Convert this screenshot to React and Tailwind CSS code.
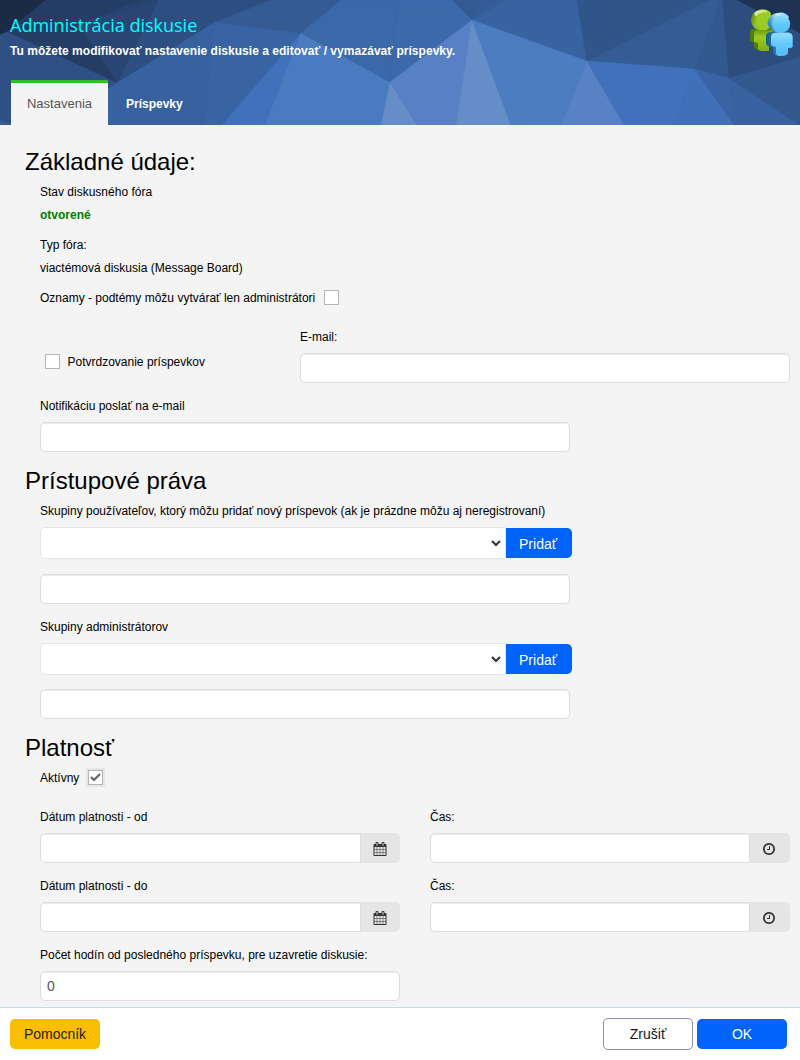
const INPUT =
  "block h-[30px] w-full rounded-[5px] border border-[#ddd] bg-white px-1.5 pb-px text-sm text-[#555] shadow-[inset_0_1px_1px_rgba(0,0,0,0.075)] outline-none";

function Label({ children, className = "" }) {
  return <div className={`h-[23px] whitespace-nowrap leading-[25px] ${className}`}>{children}</div>;
}

function Heading({ children, className = "" }) {
  return (
    <h2 className={`-ml-[15px] h-8 whitespace-nowrap text-2xl leading-8 ${className}`}>{children}</h2>
  );
}

function Facets() {
  const facets = [
    ["#1b2b43", "0,0 46,0 7,32 0,35"],
    ["#264370", "46,0 158,0 117,83 7,32"],
    ["#243c62", "46,0 75,20 117,83 7,32"],
    ["#2d4e80", "158,0 272,0 215,22 117,83"],
    ["#284573", "158,0 140,37 117,83 7,32 78,24"],
    ["#243d64", "46,0 139,0 78,24 117,83 7,32"],
    ["#2f5084", "7,32 117,83 50,125 12,125 0,120 0,35"],
    ["#355d98", "0,120 12,125 0,125"],
    ["#3861a0", "215,22 204,125 50,125 117,83"],
    ["#3964a3", "215,22 301,33 222,125 204,125"],
    ["#345b93", "272,0 341,0 301,33 215,22"],
    ["#4171ba", "301,33 265,125 222,125"],
    ["#4a7bc0", "301,33 390,82 381,125 265,125"],
    ["#3b68a8", "341,0 398,0 390,82 301,33"],
    ["#3c68ac", "398,0 452,0 472,20 390,82"],
    ["#658dc8", "390,82 417,125 381,125"],
    ["#5781c4", "472,20 456,125 417,125 390,82"],
    ["#658dc8", "472,20 511,125 456,125"],
    ["#335b93", "452,0 482,0 472,20"],
    ["#345c96", "482,0 505,0 472,20"],
    ["#3862a0", "505,0 577,0 587,61 472,20"],
    ["#4d7dc1", "472,20 587,61 561,125 511,125"],
    ["#5982c5", "587,61 624,125 561,125"],
    ["#305589", "577,0 710,0 587,61"],
    ["#345d95", "710,0 721,0 695,69 587,61"],
    ["#4171ba", "587,61 695,69 675,125 624,125"],
    ["#4070b8", "695,69 734,125 675,125"],
    ["#325890", "721,0 723,0 729,78 695,69"],
    ["#3963a2", "695,69 729,78 739,125 734,125"],
    ["#3862a0", "729,78 799,125 739,125"],
    ["#2c4d7d", "723,0 737,0 800,33 800,57 729,78"],
    ["#1e3353", "737,0 800,0 800,33"],
    ["#32588e", "729,78 800,57 800,125"],
  ];
  return (
    <svg className="absolute inset-0 h-full w-full" viewBox="0 0 800 125" preserveAspectRatio="none" aria-hidden="true">
      <rect width="800" height="125" fill="#3862a0" />
      {facets.map(([fill, points], i) => (
        <polygon key={i} points={points} fill={fill} stroke={fill} strokeWidth="0.4" />
      ))}
    </svg>
  );
}

function PeopleIcon() {
  return (
    <svg className="h-12 w-11" viewBox="0 0 44 48" aria-hidden="true">
      <defs>
        <linearGradient id="green" x1="0" x2="1" y1="0" y2="0.3">
          <stop offset="0" stopColor="#4f7d0b" />
          <stop offset="0.4" stopColor="#91c01f" />
          <stop offset="1" stopColor="#a3d22c" />
        </linearGradient>
        <linearGradient id="greenBody" x1="0" x2="0" y1="0" y2="1">
          <stop offset="0" stopColor="#6f9a14" />
          <stop offset="0.35" stopColor="#9aca25" />
          <stop offset="1" stopColor="#7fae16" />
        </linearGradient>
        <linearGradient id="blueSide" x1="0" x2="1" y1="0" y2="0">
          <stop offset="0" stopColor="#165e86" />
          <stop offset="1" stopColor="#48aee2" />
        </linearGradient>
        <linearGradient id="blueTop" x1="0" x2="1" y1="0.4" y2="0">
          <stop offset="0" stopColor="#2988bd" />
          <stop offset="0.5" stopColor="#c5ecff" />
          <stop offset="1" stopColor="#7dcbff" />
        </linearGradient>
        <linearGradient id="blue" x1="0" x2="0" y1="0" y2="1">
          <stop offset="0" stopColor="#94dcff" />
          <stop offset="0.5" stopColor="#5fc9ff" />
          <stop offset="1" stopColor="#55bff5" />
        </linearGradient>
      </defs>
      <path d="M1 22Q1 20 4 20L24 19L25 34L20 36V41Q19 43 12 42Q6 41 5 38L5 34L1 32Z" fill="#4f7d0b" />
      <path d="M5 23Q5 21 9 21H24V35H20V42H13Q9 42 9 39V34L5 33Z" fill="url(#greenBody)" />
      <path d="M11 .5Q18 -1 22 4L18 21H10Q3 19 2 12Q2 3 11 .5Z" fill="url(#green)" />
      <path d="M5 4Q10 -1 18 2L17 4Q10 3 7 8Z" fill="#d3ed91" />
      <circle cx="15.800" cy="11.800" r="8.600" fill="#9acb26" />
      <path d="M17 27Q17 24 21 23H38Q42 23 43.500 27V38Q41 40 39 39V44Q38 47 31 47Q25 47 24 44V38Q17 38 17 34Z" fill="url(#blueSide)" />
      <path d="M22 28Q22 24 26 24H39Q43.500 24 43.500 28V38Q41 39 39 39V44Q38 47 31 47Q27 47 27 44V38Q21 37 22 34Z" fill="url(#blue)" />
      <path d="M28 4Q36 2 40 8L34 24H29Q20 22 18.500 14Q20 5 28 4Z" fill="url(#blueTop)" />
      <circle cx="32.200" cy="15" r="9" fill="url(#blue)" />
    </svg>
  );
}

function CalendarIcon() {
  return (
    <svg className="mr-0.5 mt-0.5 size-3.5" viewBox="0 0 1792 1792" fill="#333" aria-hidden="true">
      <path d="M192 1664h288v-288h-288v288zm352 0h320v-288h-320v288zm-352-352h288v-320h-288v320zm352 0h320v-320h-320v320zm-352-384h288v-288h-288v288zm736 736h320v-288h-320v288zm-384-736h320v-288h-320v288zm768 736h288v-288h-288v288zm-384-352h320v-320h-320v320zm-352-864v-288q0-13-9.5-22.5t-22.5-9.5h-64q-13 0-22.5 9.5t-9.5 22.5v288q0 13 9.5 22.5t22.5 9.5h64q13 0 22.5-9.5t9.5-22.5zm736 864h288v-320h-288v320zm-384-384h320v-288h-320v288zm384 0h288v-288h-288v288zm32-480v-288q0-13-9.5-22.5t-22.5-9.5h-64q-13 0-22.5 9.5t-9.5 22.5v288q0 13 9.5 22.5t22.5 9.5h64q13 0 22.5-9.5t9.5-22.5zm384-64v1280q0 52-38 90t-90 38h-1408q-52 0-90-38t-38-90v-1280q0-52 38-90t90-38h128v-96q0-66 47-113t113-47h64q66 0 113 47t47 113v96h384v-96q0-66 47-113t113-47h64q66 0 113 47t47 113v96h128q52 0 90 38t38 90z" />
    </svg>
  );
}

function ClockIcon() {
  return (
    <svg className="mr-0.5 mt-0.5 h-3.5 w-3" viewBox="0 0 1536 1792" fill="#333" aria-hidden="true">
      <path d="M896 544v448q0 14-9 23t-23 9h-320q-14 0-23-9t-9-23v-64q0-14 9-23t23-9h224v-352q0-14 9-23t23-9h64q14 0 23 9t9 23zm416 352q0-148-73-273t-198-198-273-73-273 73-198 198-73 273 73 273 198 198 273 73 273-73 198-198 73-273zm224 0q0 209-103 385.5t-279.5 279.5-385.5 103-385.5-103-279.5-279.5-103-385.5 103-385.5 279.5-279.5 385.5-103 385.5 103 279.5 279.5 103 385.5z" />
    </svg>
  );
}

function AddonField({ label, icon, addonWidth = "w-[39px]" }) {
  return (
    <div className="w-[360px]">
      <Label>{label}</Label>
      <div className="mt-[5px] flex h-[30px]">
        <div className="min-w-0 flex-1 rounded-l-[5px] border border-[#ddd] bg-white shadow-[inset_0_1px_1px_rgba(0,0,0,0.075)]" />
        <div className={`flex items-center justify-center rounded-r-[5px] bg-[#e5e5e5] ${addonWidth}`}>{icon}</div>
      </div>
    </div>
  );
}

function GroupPicker({ inputGap = "mt-[15px]" }) {
  return (
    <>
      <div className="mt-[5px] flex h-8 w-[532px] items-center">
        <div className="flex h-8 w-[466px] items-center justify-end rounded-l-[5px] border border-[#e5e5e5] bg-white pr-[3px]">
          <svg className="h-[7px] w-3" viewBox="0 0 12 7" fill="none" stroke="#333" strokeWidth="2" aria-hidden="true">
            <path d="M2 1L6 5L10 1" />
          </svg>
        </div>
        <button className="h-[30px] w-[66px] rounded-r-[5px] bg-[#0063fb] pr-0.5 pt-0.5 text-sm text-white">Pridať</button>
      </div>
      <div className={`w-[530px] ${inputGap}`}>
        <input className={INPUT} />
      </div>
    </>
  );
}

function Checkbox({ checked = false, className = "" }) {
  return (
    <span className={`flex size-[15px] shrink-0 items-center justify-center border border-[#b5b5b5] bg-white ${className}`}>
      {checked && (
        <svg className="h-[9px] w-[11px]" viewBox="0 0 11 9" fill="none" stroke="#666" strokeWidth="2.2" aria-hidden="true">
          <path d="M1 4L4 7L10 1" />
        </svg>
      )}
    </span>
  );
}

export default function App() {
  return (
    <div className="flex h-[1060px] w-[800px] flex-col overflow-hidden bg-[#f4f4f4] font-['Liberation_Sans',Arial,sans-serif] text-xs text-black">
      <header className="relative h-[125px] shrink-0">
        <Facets />
        <div className="relative flex h-full flex-col justify-between">
          <div className="flex justify-between pl-2.5 pr-[7px] pt-[9px]">
            <div className="whitespace-nowrap pt-1">
              <h1 className="h-6 font-['Open_Sans',sans-serif] text-lg leading-6 text-[#00ffff]">Administrácia diskusie</h1>
              <p className="mt-1 h-[18px] font-bold leading-[20px] tracking-[0.03px] text-white">
                Tu môžete modifikovať nastavenie diskusie a editovať / vymazávať príspevky.
              </p>
            </div>
            <PeopleIcon />
          </div>
          <nav className="flex h-[45px] pl-[11px] text-[13px]">
            <div className="w-[97px] border-t-[3px] border-[#2fc11c] bg-[#f4f4f4] text-center leading-[41px] text-[#555]">
              Nastavenia
            </div>
            <div className="pl-[18px] pt-[3px] text-xs font-bold leading-[42px] text-white">Príspevky</div>
          </nav>
        </div>
      </header>

      <main className="flex-1 pl-10 pt-[21px]">
        <Heading>Základné údaje:</Heading>
        <Label className="mt-0.5">Stav diskusného fóra</Label>
        <Label className="font-bold text-[#008000]">otvorené</Label>
        <Label className="mt-[7px]">Typ fóra:</Label>
        <Label>viactémová diskusia (Message Board)</Label>
        <div className="mt-[7px] flex items-center">
          <Label>Oznamy - podtémy môžu vytvárať len administrátori</Label>
          <Checkbox className="ml-[9px]" />
        </div>

        <div className="mt-4 flex">
          <div className="mt-[25px] flex h-[23px] w-[260px] items-center gap-[7.5px] pl-[5px]">
            <Checkbox />
            <Label>Potvrdzovanie príspevkov</Label>
          </div>
          <div className="w-[490px]">
            <Label>E-mail:</Label>
            <input className={`${INPUT} mt-[5px]`} />
          </div>
        </div>

        <Label className="mt-[11px]">Notifikáciu poslať na e-mail</Label>
        <div className="mt-[5px] w-[530px]">
          <input className={INPUT} />
        </div>

        <Heading className="mt-[13px]">Prístupové práva</Heading>
        <Label className="mt-0.5">
          Skupiny používateľov, ktorý môžu pridať nový príspevok (ak je prázdne môžu aj neregistrovaní)
        </Label>
        <GroupPicker />
        <Label className="mt-[11px]">Skupiny administrátorov</Label>
        <GroupPicker inputGap="mt-3.5" />

        <Heading className="mt-[13px]">Platnosť</Heading>
        <div className="mt-0.5 flex items-center">
          <Label>Aktívny</Label>
          <span className="ml-[7px] bg-[#e6e6e6] p-0.5">
            <Checkbox checked />
          </span>
        </div>

        <div className="mt-4 flex gap-[30px]">
          <AddonField label="Dátum platnosti - od" icon={<CalendarIcon />} />
          <AddonField label="Čas:" icon={<ClockIcon />} addonWidth="w-10" />
        </div>
        <div className="mt-[11px] flex gap-[30px]">
          <AddonField label="Dátum platnosti - do" icon={<CalendarIcon />} />
          <AddonField label="Čas:" icon={<ClockIcon />} addonWidth="w-10" />
        </div>

        <Label className="mt-[11px]">Počet hodín od posledného príspevku, pre uzavretie diskusie:</Label>
        <div className="mt-[5px] w-[360px]">
          <input className={INPUT} defaultValue="0" />
        </div>
      </main>

      <footer className="flex h-[53px] shrink-0 items-center border-t border-[#cbd7e6] bg-white pl-2.5 pr-[13px] text-sm">
        <button className="h-[30px] w-[90px] rounded-[5px] bg-[#fabd00] text-[#222]">Pomocník</button>
        <button className="ml-auto h-8 w-[90px] rounded-[5px] border border-[#868ea8] text-[#13151b]">Zrušiť</button>
        <button className="ml-1 h-[30px] w-[90px] rounded-[5px] bg-[#0063fb] text-white">OK</button>
      </footer>
    </div>
  );
}
